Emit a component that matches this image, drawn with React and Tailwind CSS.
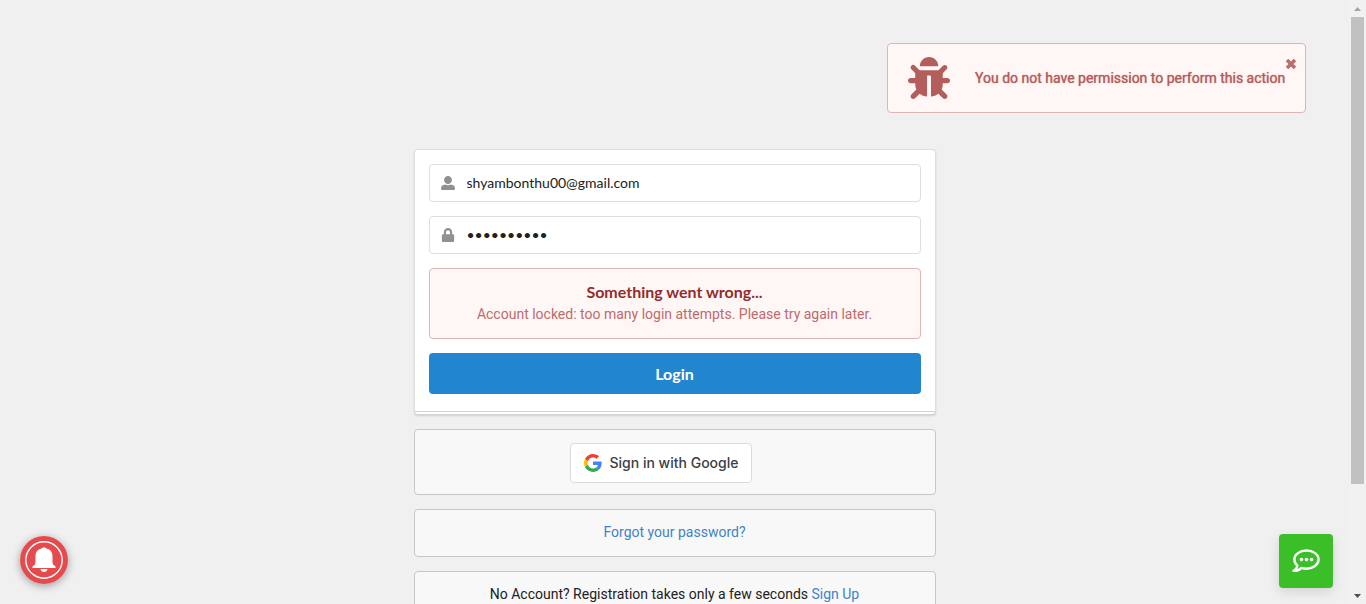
import React from "react";
import { FaBug, FaUserAlt, FaLock } from "react-icons/fa";

function Panel({ className = "", children }) {
  return (
    <section
      className={`flex w-full items-center justify-center rounded border border-[#c6c7c8] bg-[#f8f8f8] ${className}`}
    >
      {children}
    </section>
  );
}

function Field({ id, label, icon, ...props }) {
  return (
    <div className="flex h-[38px] items-center gap-[11px] rounded border border-[#dededf] bg-white px-[11px] text-[#909090]">
      <label htmlFor={id} className="flex">
        {icon}
      </label>
      <input
        id={id}
        aria-label={label}
        className="h-full min-w-0 flex-1 bg-transparent px-px pb-0.5 font-['Lato',sans-serif] text-sm text-[#212121] outline-none"
        {...props}
      />
    </div>
  );
}

function GoogleLogo() {
  return (
    <svg viewBox="0 0 48 48" className="size-[18px]" aria-hidden="true">
      <path fill="#EA4335" d="M24 9.5c3.540 0 6.710 1.220 9.210 3.600l6.850-6.850C35.900 2.380 30.470 0 24 0 14.620 0 6.510 5.380 2.560 13.220l7.980 6.190C12.430 13.720 17.740 9.500 24 9.500z" />
      <path fill="#4285F4" d="M46.980 24.550c0-1.570-.15-3.090-.38-4.550H24v9.020h12.940c-.58 2.960-2.260 5.480-4.780 7.180l7.730 6c4.510-4.180 7.090-10.360 7.090-17.650z" />
      <path fill="#FBBC05" d="M10.530 28.590c-.48-1.450-.76-2.990-.76-4.590s.27-3.140.76-4.590l-7.980-6.190C.92 16.460 0 20.120 0 24c0 3.880.92 7.540 2.560 10.780l7.970-6.190z" />
      <path fill="#34A853" d="M24 48c6.480 0 11.930-2.130 15.890-5.810l-7.730-6c-2.150 1.450-4.920 2.300-8.160 2.300-6.260 0-11.570-4.220-13.470-9.910l-7.980 6.190C6.510 42.620 14.620 48 24 48z" />
    </svg>
  );
}

function Cross() {
  return (
    <svg viewBox="0 0 12 12" className="size-3" aria-hidden="true">
      <path d="M2 2l8 8M10 2L2 10" stroke="currentColor" strokeWidth="3.500" />
    </svg>
  );
}

function ChatBubble() {
  return (
    <svg viewBox="0 0 30 26" className="h-[26px] w-[30px]" aria-hidden="true">
      <path
        d="M15.500 2.500C8.800 2.500 3.400 6.500 3.400 11.600c0 2.500 1.200 4.500 3 6.100-.3 2.100-1.700 4.300-3.900 5.100 3.100.4 6-.9 8-2.900 1.600.5 3.200.8 5 .8 6.700 0 12.100-4 12.100-9.100S22.200 2.500 15.500 2.500z"
        fill="none"
        stroke="currentColor"
        strokeWidth="2.400"
        strokeLinejoin="round"
      />
      <circle cx="10.500" cy="11.600" r="1.800" fill="currentColor" />
      <circle cx="15.500" cy="11.600" r="1.800" fill="currentColor" />
      <circle cx="20.500" cy="11.600" r="1.800" fill="currentColor" />
    </svg>
  );
}

function Bell() {
  return (
    <svg viewBox="0 0 48 48" className="size-12" aria-hidden="true">
      <circle cx="24" cy="24" r="24" fill="#e54b4d" />
      <circle cx="24" cy="24" r="18.2" fill="none" stroke="#fff" strokeWidth="1.4" />
      <path
        d="M24 11.500c-1.200 0-2 .5-2.400 1.100-4.300.9-6.100 3.800-6.100 7.500v5.900c0 2-.7 3.200-3 4.200v1.800h23v-1.800c-2.300-1-3-2.200-3-4.200v-5.900c0-3.700-1.800-6.600-6.100-7.500-.4-.6-1.200-1.100-2.400-1.100z"
        fill="#fff"
      />
      <path d="M20.500 33h7c-.4 1.900-1.700 3-3.500 3s-3.100-1.100-3.500-3z" fill="#fff" />
    </svg>
  );
}

function ScrollTrack() {
  return (
    <div className="flex w-[17px] shrink-0 flex-col items-center bg-[#f1f1f1]" aria-hidden="true">
      <div className="flex h-[17px] shrink-0 items-center">
        <svg viewBox="0 0 7 4" className="h-1 w-[7px]">
          <path d="M0 4h7L3.500 0z" fill="#a3a3a3" />
        </svg>
      </div>
      <div className="flex w-[13px] flex-1 flex-col">
        <div className="h-[82%] bg-[#c1c1c1]" />
      </div>
      <div className="flex h-[17px] shrink-0 items-center">
        <svg viewBox="0 0 7 4" className="h-1 w-[7px]">
          <path d="M0 0h7L3.500 4z" fill="#505050" />
        </svg>
      </div>
    </div>
  );
}

export default function App() {
  return (
    <div className="flex h-screen overflow-hidden bg-[#f0f0f0] font-['Roboto',sans-serif] text-sm text-[#212121]">
      <div className="min-w-0 flex-1 overflow-hidden">
        <main className="mx-auto flex max-w-[522px] flex-col gap-[14px] pt-[149px]">
          <div className="rounded border border-[#dddedf] bg-white shadow-[0_1px_2px_0_rgba(34,36,38,0.15)]">
            <form className="flex flex-col gap-[14px] px-[14px] pt-[14px] pb-[17px]" onSubmit={(e) => e.preventDefault()}>
              <Field
                id="email"
                label="E-mail address"
                type="email"
                defaultValue="shyambonthu00@gmail.com"
                icon={<FaUserAlt className="size-[14px]" />}
              />
              <Field
                id="password"
                label="Password"
                type="password"
                defaultValue="abcdefghij"
                icon={<FaLock className="size-[14px]" />}
              />
              <div className="flex h-[71px] flex-col items-center justify-center gap-0.5 rounded border border-[#e0b4b4] bg-[#fff6f6] pb-0.5" role="alert">
                <h2 className="font-['Lato',sans-serif] text-base leading-5 font-bold text-[#912d2b]">
                  Something went wrong...
                </h2>
                <p className="leading-5 text-[#bb6c6b]">
                  Account locked: too many login attempts. Please try again later.
                </p>
              </div>
              <button
                type="submit"
                className="h-[41px] rounded bg-[#2185d0] font-['Lato',sans-serif] text-base font-bold text-white"
              >
                Login
              </button>
            </form>
            <div className="h-[3px] rounded-b border-t border-[#d4d4d5] bg-white shadow-[0_1px_0_0_#d4d4d5]" />
          </div>

          <Panel className="h-[66px] pt-0.5 pr-[27px]">
            <button
              type="button"
              className="flex h-10 items-center gap-2 rounded border border-[#dadce0] bg-white px-[13px] font-['Inter',sans-serif] font-medium text-[#3c4043]"
            >
              <GoogleLogo />
              Sign in with Google
            </button>
          </Panel>

          <Panel className="h-12 pb-0.5">
            <a href="#forgot" className="text-[#4183c4]">
              Forgot your password?
            </a>
          </Panel>

          <Panel className="h-12 pb-0.5">
            <p>
              No Account? Registration takes only a few seconds{" "}
              <a href="#signup" className="text-[#4183c4]">
                Sign Up
              </a>
            </p>
          </Panel>
        </main>
      </div>
      <ScrollTrack />

      <div
        className="fixed top-[43px] right-[60px] flex h-[70px] w-[419px] items-center gap-[25px] rounded border border-[#e0b4b4] bg-[#fff6f6] pl-5 text-[#b35e5d]"
        role="status"
      >
        <FaBug className="size-[42px]" />
        <p className="[text-shadow:0_0_1px_#b35e5d]">You do not have permission to perform this action</p>
        <button type="button" aria-label="Dismiss" className="absolute top-[14px] right-2 text-[#bb6c6b]">
          <Cross />
        </button>
      </div>

      <button
        type="button"
        aria-label="Notifications"
        className="fixed bottom-5 left-5 rounded-full shadow-[0_2px_8px_0_rgba(0,0,0,0.35)]"
      >
        <Bell />
      </button>

      <button
        type="button"
        aria-label="Chat"
        className="fixed right-[33px] bottom-4 flex size-[54px] items-center justify-center rounded bg-[#3abf28] text-white shadow-[0_4px_12px_0_rgba(0,0,0,0.12)]"
      >
        <ChatBubble />
      </button>
    </div>
  );
}
